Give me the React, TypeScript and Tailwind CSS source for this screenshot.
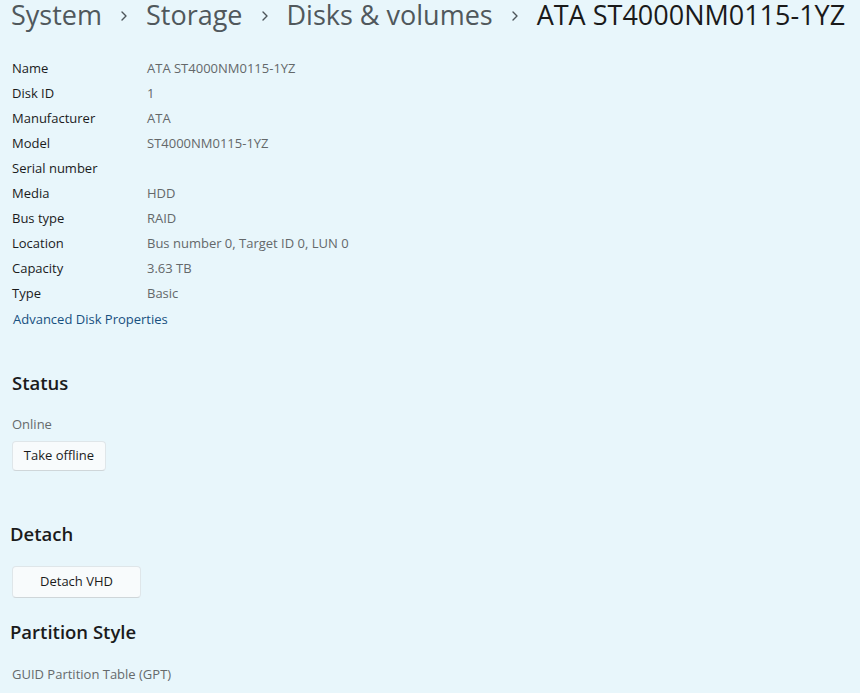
import React from "react";

const rows: [string, string][] = [
  ["Name", "ATA ST4000NM0115-1YZ"],
  ["Disk ID", "1"],
  ["Manufacturer", "ATA"],
  ["Model", "ST4000NM0115-1YZ"],
  ["Serial number", ""],
  ["Media", "HDD"],
  ["Bus type", "RAID"],
  ["Location", "Bus number 0, Target ID 0, LUN 0"],
  ["Capacity", "3.63 TB"],
  ["Type", "Basic"],
];

function Chevron() {
  return (
    <svg width="8" height="12" viewBox="0 0 8 12" className="mx-[18px] mt-[2px]" fill="none">
      <path d="M2 2 L6 6 L2 10" stroke="#4d5559" strokeWidth="1.4" strokeLinecap="round" strokeLinejoin="round" />
    </svg>
  );
}

export default function App() {
  return (
    <div className="w-[860px] h-[693px] overflow-hidden bg-[#e8f6fb] font-['Open_Sans','Noto_Sans',sans-serif] text-[#1b1b1b]">
      <div className="flex items-center h-[29px] pl-[11px] text-[27px] leading-[29px]">
        <span className="text-[#50585c]">System</span>
        <Chevron />
        <span className="text-[#50585c]">Storage</span>
        <Chevron />
        <span className="text-[#50585c]">Disks &amp; volumes</span>
        <Chevron />
        <span className="text-[#1a1a1a]">ATA ST4000NM0115-1YZ</span>
      </div>

      <div className="mt-[27px] pl-[12px] text-[13px]">
        {rows.map(([k, v]) => (
          <div key={k} className="flex items-center h-[25px]">
            <span className="w-[135px] text-[#1b1b1b]">{k}</span>
            <span className="text-[#64686a]">{v}</span>
          </div>
        ))}
        <div className="flex items-center h-[25px] mt-[1px] pl-[1px] text-[#17507f]">Advanced Disk Properties</div>
      </div>

      <div className="pl-[12px]">
        <div className="mt-[37px] h-[28px] flex items-center text-[18.5px] font-semibold">Status</div>
        <div className="mt-[18px] h-[20px] flex items-center text-[13px] text-[#666a6c]">Online</div>
        <button className="mt-[6px] h-[30px] w-[94px] rounded-[4px] border border-[#dfe6e9] border-b-[#cfd6d9] bg-[#f8fbfc] text-[13px] text-[#1b1b1b]">
          Take offline
        </button>
      </div>

      <div className="pl-[10px]">
        <div className="mt-[49px] h-[28px] flex items-center text-[18.5px] font-semibold">Detach</div>
        <button className="ml-[2px] mt-[18px] h-[32px] w-[129px] rounded-[4px] border border-[#dfe6e9] border-b-[#cfd6d9] bg-[#f8fbfc] text-[13px] text-[#1b1b1b]">
          Detach VHD
        </button>
        <div className="mt-[20px] h-[28px] flex items-center text-[18.5px] font-semibold">Partition Style</div>
        <div className="mt-[19px] pl-[2px] h-[20px] flex items-center text-[13px] text-[#666a6c]">GUID Partition Table (GPT)</div>
      </div>
    </div>
  );
}
